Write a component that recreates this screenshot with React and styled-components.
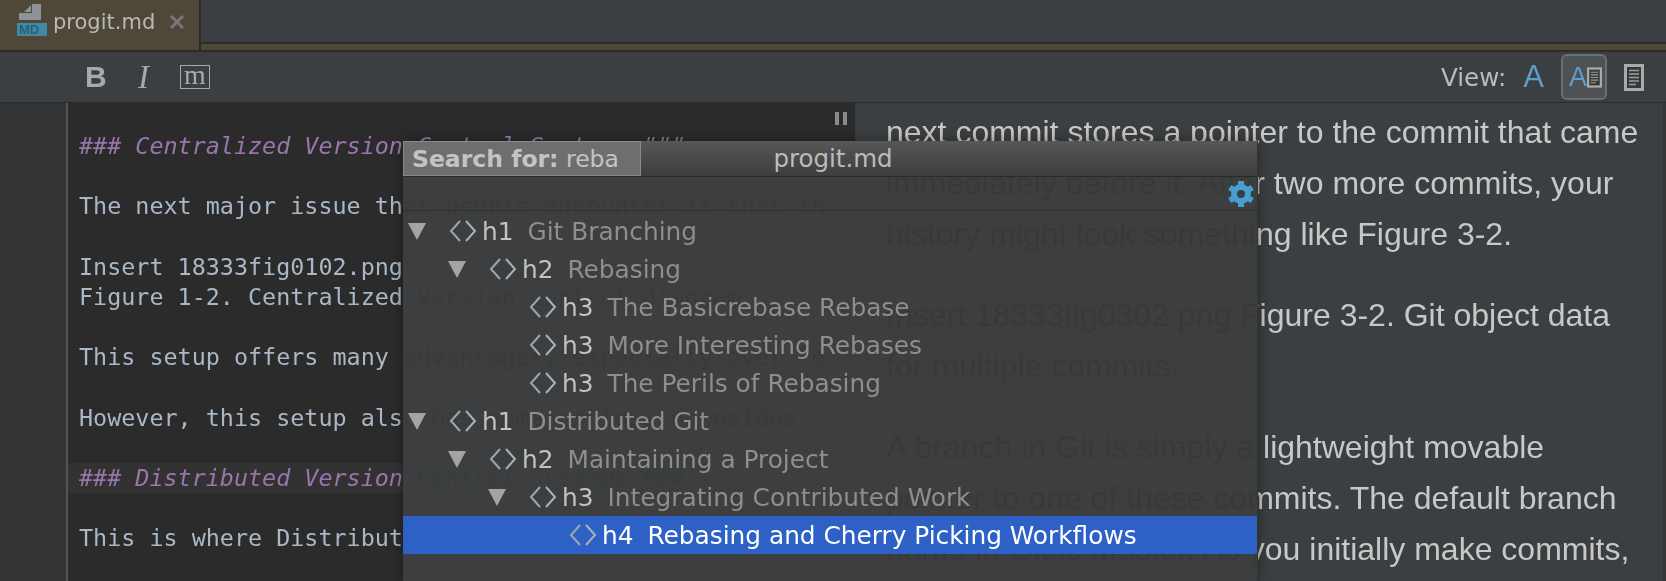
import styled, { createGlobalStyle } from 'styled-components';

const Global = createGlobalStyle`
  html, body { margin: 0; padding: 0; background: #3c3f41; overflow: hidden; }
  * { box-sizing: border-box; }
`;

const Page = styled.div`
  position: relative;
  width: 1666px;
  height: 581px;
  display: flex;
  flex-direction: column;
  overflow: hidden;
  font-family: "Liberation Sans", Arial, sans-serif;
`;

const TabBar = styled.div`
  display: flex;
  height: 52px;
  background: #4f4737;
  border-bottom: 2px solid #2b2b2b;
`;
const Tab = styled.div`
  width: 201px;
  height: 50px;
  display: flex;
  align-items: center;
  border-right: 2px solid #2b2b2b;
  padding-left: 17px;
`;
const TabRest = styled.div`
  flex: 1;
  height: 44px;
  background: #3c3f41;
  border-bottom: 2px solid #2b2b2b;
`;
const FileIcon = styled.div`
  position: relative;
  flex: none;
  width: 30px;
  height: 32px;
  margin-top: -10px;
`;
const MdBadge = styled.span`
  position: absolute;
  left: 0;
  bottom: 0;
  width: 30px;
  height: 13px;
  background: #3f8ba5;
  color: #2a5f74;
  font: bold 13px/13px "Liberation Sans", sans-serif;
  padding-left: 2px;
`;
const TabName = styled.span`
  margin-left: 6px;
  width: 100px;
  font: 21px "DejaVu Sans", sans-serif;
  color: #b8b8b8;
  margin-top: -7px;
`;
const TabClose = styled.svg`
  margin-left: 17px;
  margin-top: -7px;
`;

const Toolbar = styled.div`
  height: 51px;
  display: flex;
  align-items: center;
  background: #3c3f41;
  border-bottom: 1px solid #2b2b2b;
  padding-left: 85px;
`;
const BoldBtn = styled.span`
  font: bold 30px "Liberation Sans", sans-serif;
  color: #a9a9a9;
  width: 53px;
`;
const ItalicBtn = styled.span`
  font: italic 33px "Liberation Serif", serif;
  color: #a9a9a9;
  width: 42px;
`;
const MonoBtn = styled.span`
  width: 30px;
  height: 24px;
  border: 1px solid #a9a9a9;
  color: #a9a9a9;
  font: 28px/17px "Liberation Serif", serif;
  text-align: center;
`;
const ViewGroup = styled.div`
  margin-left: auto;
  display: flex;
  align-items: center;
  padding-right: 22px;
`;
const ViewLabel = styled.span`
  font: 24.6px "DejaVu Sans", sans-serif;
  color: #b8bcc0;
  margin-right: 17px;
`;
const ViewA = styled.span`
  font: ${(p) => p.$size}px "Liberation Sans", sans-serif;
  color: #5a9ec9;
`;
const ViewBtn = styled.div`
  width: 46px;
  height: 46px;
  margin: 0 17px;
  display: flex;
  align-items: center;
  padding-left: 6px;
  border-radius: 6px;
  border: 2px solid #687074;
  background: #4e5254;
`;

const Split = styled.div`
  flex: 1;
  display: flex;
  min-height: 0;
`;
const Gutter = styled.div`
  width: 68px;
  background: #313335;
  border-right: 2px solid #555;
`;
const Editor = styled.div`
  position: relative;
  width: 787px;
  background: #2b2b2b;
  overflow: hidden;
  padding-top: 28px;
  font: 23.4px/30.2px "DejaVu Sans Mono", monospace;
  color: #a9b7c6;
  white-space: pre;
`;
const Line = styled.div`
  height: 30.2px;
  padding-left: 11px;
  background: ${(p) => (p.$current ? '#323232' : 'transparent')};
  color: ${(p) => (p.$heading ? '#9876aa' : 'inherit')};
  font-style: ${(p) => (p.$heading ? 'italic' : 'normal')};
`;
const PauseMark = styled.div`
  position: absolute;
  top: 9px;
  right: 8px;
  width: 12px;
  height: 13px;
  border-left: 4px solid #8a8a8a;
  border-right: 4px solid #8a8a8a;
`;
const Preview = styled.div`
  flex: 1;
  background: #3c3f41;
  border-right: 3px solid #333537;
  padding: 4px 0 0 31px;
  font: 32px/51px "Liberation Sans", Arial, sans-serif;
  color: #c8c8c8;
`;
const Para = styled.p`
  margin: 0 0 30px;
  white-space: pre;
`;

// the backdrop text shows through the popup as a faint darker ghost
const Popup = styled.div`
  position: absolute;
  left: 403px;
  top: 141px;
  width: 855px;
  height: 440px;
  border-right: 1px solid #333;
  box-shadow: 0 0 12px rgba(0, 0, 0, 0.4);
  background: rgba(56, 58, 60, 0.972);
  backdrop-filter: invert(1);
`;
const PopupTitle = styled.div`
  height: 36px;
  background: linear-gradient(#575757, #3d3d3d);
  border-bottom: 1px solid #2a2a2a;
  display: flex;
  align-items: center;
  justify-content: center;
  padding-left: 6px;
  font: 24.5px "DejaVu Sans", sans-serif;
  color: #bcbcbc;
`;
const SpeedSearch = styled.div`
  position: absolute;
  left: 0;
  top: 0;
  width: 238px;
  height: 35px;
  background: #6e6e6e;
  border: 1px solid #8a8a8a;
  padding-left: 8px;
  font: 23.5px/34px "DejaVu Sans", sans-serif;
  color: #c4c4c4;
  b { font-weight: bold; }
`;
const PopupTools = styled.div`
  height: 34px;
  display: flex;
  align-items: center;
  justify-content: flex-end;
  padding-right: 3px;
  border-bottom: 1px solid #2f3133;
`;
const Tree = styled.div`
  padding-top: 1px;
`;
const Row = styled.div`
  height: 38px;
  display: flex;
  align-items: center;
  padding-left: ${(p) => 5 + (p.$level - 1) * 40}px;
  font: 24.8px "DejaVu Sans", sans-serif;
  background: ${(p) => (p.$selected ? 'rgba(45, 99, 204, 0.95)' : 'transparent')};
  color: ${(p) => (p.$selected ? '#ffffff' : '#8e8e8e')};
`;
const Arrow = styled.span`
  width: 0;
  height: 0;
  border-left: 9px solid transparent;
  border-right: 9px solid transparent;
  border-top: 17px solid #a4a4a4;
  visibility: ${(p) => (p.$hidden ? 'hidden' : 'visible')};
  margin-right: 23px;
`;
const Tag = styled.span`
  margin: 0 14px 0 5px;
  color: ${(p) => (p.$selected ? '#ffffff' : '#c2c2c2')};
`;

const TagIcon = () => (
  <svg width="28" height="22" viewBox="0 0 28 22" fill="none" strokeWidth="2">
    <path d="M11 1 L2 11 L11 21" stroke="#9fa6aa" />
    <path d="M17 1 L26 11 L17 21" stroke="#a9b2b6" />
  </svg>
);

const Gear = () => (
  <svg width="26" height="26" viewBox="0 0 26 26">
    <g fill="#479ed0">
      {[0, 60, 120, 180, 240, 300].map((a) => (
        <rect key={a} x="10" y="0" width="6" height="6" transform={`rotate(${a} 13 13)`} />
      ))}
    </g>
    <circle cx="13" cy="13" r="7" fill="none" stroke="#479ed0" strokeWidth="6" />
  </svg>
);

const DocIcon = ({ w, h }) => (
  <svg width={w} height={h} viewBox="0 0 20 27">
    <rect x="1.5" y="1.5" width="17" height="24" fill="#36393a" stroke="#aaaaaa" strokeWidth="3" />
    <path d="M5 6.5 H15 M5 10 H15 M5 13.5 H15 M5 17 H15 M5 20.5 H12" stroke="#9c9c9c" strokeWidth="1.4" />
  </svg>
);

const editorLines = [
  { text: '### Centralized Version Control Systems ###', heading: true },
  { text: '' },
  { text: 'The next major issue that people encounter is that th' },
  { text: '' },
  { text: 'Insert 18333fig0102.png' },
  { text: 'Figure 1-2. Centralized version control diagram' },
  { text: '' },
  { text: 'This setup offers many advantages, especially over lo' },
  { text: '' },
  { text: 'However, this setup also has some serious downsides.' },
  { text: '' },
  { text: '### Distributed Version Control Systems ###', heading: true, current: true },
  { text: '' },
  { text: 'This is where Distributed Version Control Systems' },
];

const treeRows = [
  { level: 1, tag: 'h1', title: 'Git Branching', open: true },
  { level: 2, tag: 'h2', title: 'Rebasing', open: true },
  { level: 3, tag: 'h3', title: 'The Basicrebase Rebase' },
  { level: 3, tag: 'h3', title: 'More Interesting Rebases' },
  { level: 3, tag: 'h3', title: 'The Perils of Rebasing' },
  { level: 1, tag: 'h1', title: 'Distributed Git', open: true },
  { level: 2, tag: 'h2', title: 'Maintaining a Project', open: true },
  { level: 3, tag: 'h3', title: 'Integrating Contributed Work', open: true },
  { level: 4, tag: 'h4', title: 'Rebasing and Cherry Picking Workflows', selected: true },
];

const App = () => {
  return (
    <Page>
      <Global />
      <TabBar>
        <Tab>
          <FileIcon>
            <svg width="30" height="18" viewBox="0 0 30 18">
              <path d="M7 8 L14 1 V8 Z M15 0 H24 V16 H2 V9 H15 Z" fill="#8b9396" />
            </svg>
            <MdBadge>MD</MdBadge>
          </FileIcon>
          <TabName>progit.md</TabName>
          <TabClose width="14" height="14" viewBox="0 0 14 14">
            <path d="M1 1 L13 13 M13 1 L1 13" stroke="#777" strokeWidth="3" />
          </TabClose>
        </Tab>
        <TabRest />
      </TabBar>
      <Toolbar>
        <BoldBtn>B</BoldBtn>
        <ItalicBtn>I</ItalicBtn>
        <MonoBtn>m</MonoBtn>
        <ViewGroup>
          <ViewLabel>View:</ViewLabel>
          <ViewA $size={31}>A</ViewA>
          <ViewBtn>
            <ViewA $size={27}>A</ViewA>
            <DocIcon w={15} h={23} />
          </ViewBtn>
          <DocIcon w={20} h={27} />
        </ViewGroup>
      </Toolbar>
      <Split>
        <Gutter />
        <Editor>
          {editorLines.map((l, i) => (
            <Line key={i} $heading={l.heading} $current={l.current}>{l.text}</Line>
          ))}
          <PauseMark />
        </Editor>
        <Preview>
          <Para>{'next commit stores a pointer to the commit that came\nimmediately before it. After two more commits, your\nhistory might look something like Figure 3-2.'}</Para>
          <Para>{'Insert 18333fig0302.png Figure 3-2. Git object data\nfor multiple commits.'}</Para>
          <Para>{'A branch in Git is simply a lightweight movable\npointer to one of these commits. The default branch\nname in Git is master. As you initially make commits,'}</Para>
        </Preview>
      </Split>
      <Popup>
        <PopupTitle>progit.md</PopupTitle>
        <SpeedSearch><b>Search for:</b> reba</SpeedSearch>
        <PopupTools><Gear /></PopupTools>
        <Tree>
          {treeRows.map((r) => (
            <Row key={r.title} $level={r.level} $selected={r.selected}>
              <Arrow $hidden={!r.open} />
              <TagIcon />
              <Tag $selected={r.selected}>{r.tag}</Tag>
              {r.title}
            </Row>
          ))}
        </Tree>
      </Popup>
    </Page>
  );
};

export default App;
